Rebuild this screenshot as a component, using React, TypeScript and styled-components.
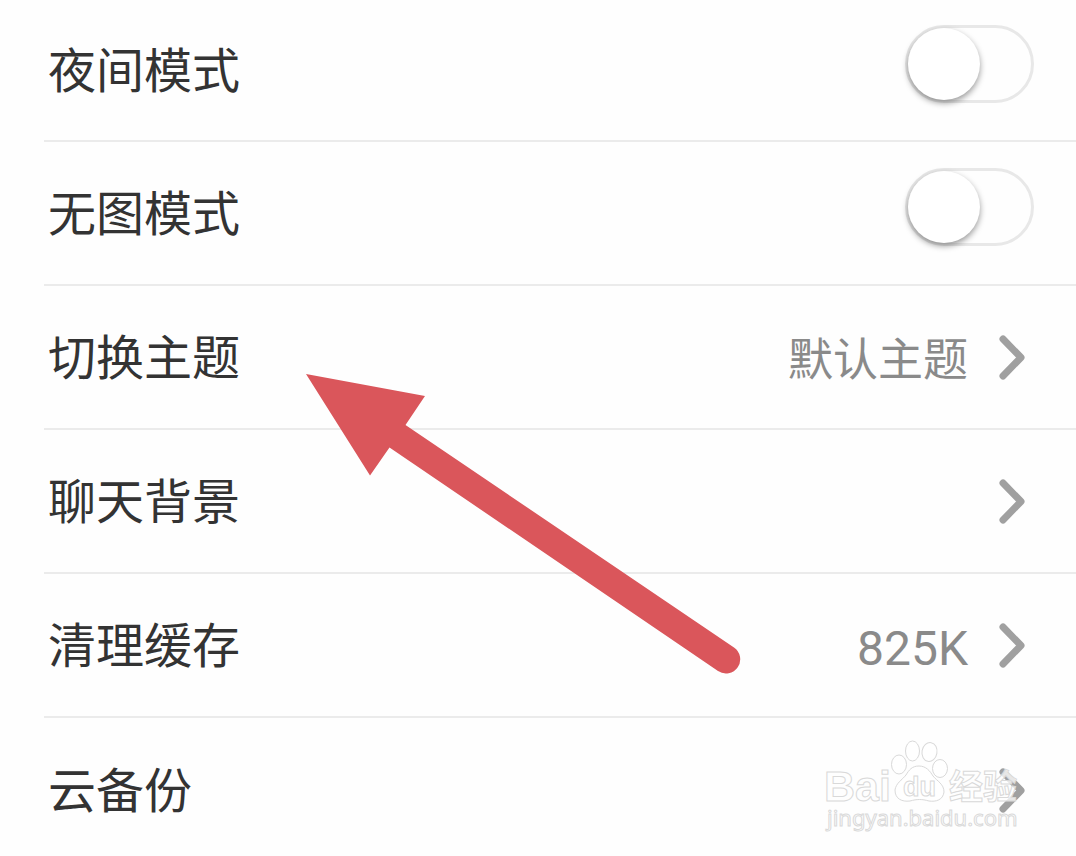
import React from "react";
import styled, { createGlobalStyle } from "styled-components";

const GlobalStyle = createGlobalStyle`
  * { box-sizing: border-box; }
  body {
    margin: 0;
    background: #fefefe;
    color: #333;
    font-family: Roboto, "Noto Sans CJK SC", sans-serif;
  }
`;

const Page = styled.main`
  position: relative;
  min-height: 100vh;
  overflow: hidden;
`;

const List = styled.ul`
  list-style: none;
  margin: 0;
  padding: 0 0 0 44px;
`;

const Item = styled.li`
  height: 144px;
  border-bottom: 2px solid #ebebeb;

  &:first-child { height: 142px; }
  &:last-child { border-bottom: 0; }
`;

const ToggleRow = styled.label`
  display: flex;
  align-items: center;
  justify-content: space-between;
  height: 100%;
  padding: 0 42px 0 4px;
`;

const LinkRow = styled.button`
  display: flex;
  align-items: center;
  width: 100%;
  height: 100%;
  padding: 0 50px 0 4px;
  border: 0;
  background: none;
  color: inherit;
  font: inherit;
  text-align: left;
`;

const Title = styled.span`
  flex: 1;
  padding-top: 4px;
  font-size: 48px;
  line-height: 72px;
`;

const Value = styled.span<{ $latin?: boolean }>`
  margin-right: 30px;
  padding-top: 8px;
  color: #8a8a8a;
  font-size: ${(p) => (p.$latin ? 48 : 45)}px;
  line-height: 72px;
`;

const Switch = styled.input`
  appearance: none;
  width: 129px;
  height: 78px;
  margin: 0 0 13px;
  border: 3px solid #e8e8e8;
  border-radius: 39px;
  background: #fefefe;

  &::before {
    content: "";
    display: block;
    width: 72px;
    height: 72px;
    border-radius: 50%;
    background: #fff;
    box-shadow: 0 3px 6px rgba(0, 0, 0, 0.4);
  }

  &:checked::before { margin-left: auto; }
`;

const ArrowMark = styled.svg`
  position: absolute;
  top: 370px;
  left: 300px;
  pointer-events: none;
`;

const Watermark = styled.svg`
  position: absolute;
  top: 736px;
  right: 52px;
  pointer-events: none;
`;

const Chevron = () => (
  <svg width="28" height="48" viewBox="0 0 28 48" fill="none" aria-hidden="true">
    <path d="M5 6 23 24.500 5 43" stroke="#a0a0a0" strokeWidth="7" strokeLinecap="round" strokeLinejoin="round" />
  </svg>
);

type Setting = { title: string; kind: "toggle" | "link"; value?: string; latin?: boolean };

const settings: Setting[] = [
  { title: "夜间模式", kind: "toggle" },
  { title: "无图模式", kind: "toggle" },
  { title: "切换主题", kind: "link", value: "默认主题" },
  { title: "聊天背景", kind: "link" },
  { title: "清理缓存", kind: "link", value: "825K", latin: true },
  { title: "云备份", kind: "link" },
];

export default function App() {
  return (
    <Page>
      <GlobalStyle />
      <List>
        {settings.map((s) => (
          <Item key={s.title}>
            {s.kind === "toggle" ? (
              <ToggleRow>
                <Title>{s.title}</Title>
                <Switch type="checkbox" role="switch" />
              </ToggleRow>
            ) : (
              <LinkRow type="button">
                <Title>{s.title}</Title>
                {s.value && <Value $latin={s.latin}>{s.value}</Value>}
                <Chevron />
              </LinkRow>
            )}
          </Item>
        ))}
      </List>

      <ArrowMark width="444" height="308" viewBox="300 370 444 308" aria-hidden="true">
        <path
          d="M306 374 425 396 405.500 425 734 647.500A14 14 0 0 1 718 671L389.500 447.500 370 475.500Z"
          fill="#da565b"
        />
      </ArrowMark>

      <Watermark width="204" height="104" viewBox="820 736 204 104">
        <g fill="#fff" fillOpacity="0.75" stroke="#d9d9d9" strokeWidth="1">
          <ellipse cx="899" cy="764.500" rx="7.500" ry="9.500" />
          <ellipse cx="912.500" cy="751" rx="7" ry="10" />
          <ellipse cx="929.500" cy="752" rx="7.500" ry="9.500" transform="rotate(10 929.500 752)" />
          <ellipse cx="940" cy="768.500" rx="7.500" ry="9" />
          <path d="M919 766C926 766 930 771 933 776C937 781 944 784 944 792C943 800 936 802 929 801C922 799 917 799 910 801C902 802 895 799 895 790C896 783 902 780 906 775C909 770 912 766 919 766Z" />
          <g fontWeight="700">
            <text x="824" y="801" fontSize="43" fontFamily='"Liberation Sans", sans-serif'>Bai</text>
            <text x="903" y="796" fontSize="27" fontFamily='"Liberation Sans", sans-serif'>du</text>
            <text x="949" y="799" fontSize="34" fontFamily='"Noto Sans CJK SC", sans-serif'>经验</text>
          </g>
          <text x="827" y="826" fontSize="22" fontFamily='"Noto Sans", sans-serif'>jingyan.baidu.com</text>
        </g>
      </Watermark>
    </Page>
  );
}
